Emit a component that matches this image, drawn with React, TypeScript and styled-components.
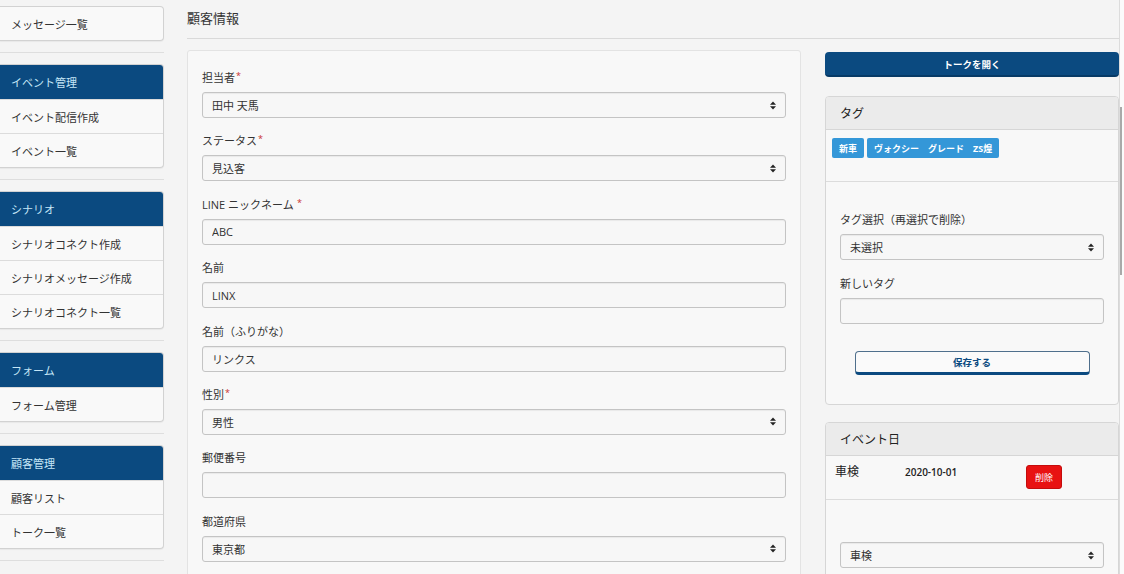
import React from 'react';
import styled, { createGlobalStyle } from 'styled-components';

const GlobalStyle = createGlobalStyle`
  html, body { margin: 0; padding: 0; overflow: hidden; background: #f4f4f4; }
  body { font-family: "Open Sans", "Noto Sans CJK JP", sans-serif; color: #333; }
  * { box-sizing: border-box; }
`;

const Page = styled.div`
  display: flex;
  align-items: flex-start;
  width: 1124px;
  height: 574px;
  overflow: hidden;
  background: #f4f4f4;
`;

/* ---------- Sidebar ---------- */
const Sidebar = styled.nav`
  width: 164px;
  flex: none;
  padding-top: 6px;
  display: flex;
  flex-direction: column;
  & > * { flex: none; }
`;

const NavCard = styled.div`
  background: #f9f9f9;
  border: 1px solid #d2d2d2;
  border-left: none;
  border-radius: 0 4px 4px 0;
  overflow: hidden;
  box-shadow: 0 1px 1px rgba(0, 0, 0, 0.05);
`;

const NavHeader = styled.div`
  height: 34px;
  display: flex;
  align-items: center;
  padding-left: 11px;
  background: #0b4a80;
  color: #c4e6f7;
  font-size: 11px;
`;

const NavItem = styled.div`
  box-sizing: content-box;
  height: 33px;
  display: flex;
  align-items: center;
  padding-left: 11px;
  font-size: 11px;
  color: #333;
  & + &,
  ${NavHeader} + & {
    border-top: 1px solid #dcdcdc;
  }
`;

const NavDivider = styled.div`
  height: 1px;
  background: #dedede;
  margin: 11px 0;
`;

/* ---------- Main ---------- */
const Main = styled.main`
  width: 932px;
  margin-left: 23px;
  flex: none;
  display: flex;
  flex-direction: column;
  & > * { flex: none; }
`;

const TitleBar = styled.div`
  height: 39px;
  padding-bottom: 3px;
  border-bottom: 1px solid #d9d9d9;
  display: flex;
  align-items: center;
  font-size: 13px;
  color: #333;
`;

const Content = styled.div`
  margin-top: 11px;
  display: grid;
  grid-template-columns: 614px 294px;
  gap: 24px;
  align-items: start;
`;

const FormPanel = styled.section`
  border: 1px solid #e3e3e3;
  border-radius: 3px;
  background: #f8f8f8;
  padding: 19px 14px;
`;

const Field = styled.div<{ $gap?: number }>`
  margin-bottom: ${(p) => (p.$gap ?? 15.4)}px;
`;

const Label = styled.label`
  display: block;
  font-size: 11px;
  line-height: 16px;
  margin-bottom: 6px;
  color: #333;
`;

const Req = styled.span`
  color: #c9302c;
  font-size: 9px;
  vertical-align: top;
  line-height: 12px;
  margin-left: 1px;
`;

const TextInput = styled.input`
  display: block;
  width: 100%;
  height: 26px;
  border: 1px solid #c4c4c4;
  border-radius: 3px;
  background: #f7f7f7;
  padding: 0 9px;
  font-family: inherit;
  font-size: 11px;
  color: #333;
  box-shadow: inset 0 1px 1px rgba(0, 0, 0, 0.06);
  outline: none;
`;

const SelectBox = styled.div`
  height: 26px;
  border: 1px solid #c4c4c4;
  border-radius: 3px;
  background: #f7f7f7;
  padding: 0 9px;
  display: flex;
  align-items: center;
  justify-content: space-between;
  font-size: 11px;
  color: #333;
  box-shadow: inset 0 1px 1px rgba(0, 0, 0, 0.06);
`;

const Arrow = () => (
  <svg width="6" height="9" viewBox="0 0 6 9" aria-hidden="true">
    <polygon points="0,3.8 3,0.4 6,3.8" fill="#222" />
    <polygon points="0,5.2 6,5.2 3,8.6" fill="#222" />
  </svg>
);

const Select: React.FC<{ value: string }> = ({ value }) => (
  <SelectBox>
    <span>{value}</span>
    <Arrow />
  </SelectBox>
);

/* ---------- Right column ---------- */
const SideColumn = styled.aside`
  display: flex;
  flex-direction: column;
`;

const PrimaryButton = styled.button`
  margin-top: 2px;
  height: 25px;
  border: none;
  border-bottom: 2px solid #073a66;
  border-radius: 4px;
  background: #0b4a80;
  color: #fff;
  font-family: inherit;
  font-size: 9.5px;
  font-weight: 700;
`;

const Panel = styled.section<{ $mt: number }>`
  margin-top: ${(p) => p.$mt}px;
  border: 1px solid #d6d6d6;
  border-radius: 4px;
  background: #f8f8f8;
  overflow: hidden;
`;

const PanelHeader = styled.div`
  height: 33px;
  background: #ebebeb;
  border-bottom: 1px solid #d6d6d6;
  padding-left: 14px;
  display: flex;
  align-items: center;
  font-size: 12px;
  color: #222;
`;

const TagArea = styled.div`
  height: 52px;
  padding: 8px 6px 0;
  border-bottom: 1px solid #dcdcdc;
  display: flex;
  align-items: flex-start;
  gap: 3px;
`;

const Tag = styled.span`
  height: 20px;
  padding: 0 7px;
  display: inline-flex;
  align-items: center;
  background: #3497d8;
  border-radius: 2px;
  color: #fff;
  font-size: 9px;
  font-weight: 700;
  white-space: pre;
`;

const PanelBody = styled.div<{ $pt: number }>`
  padding: ${(p) => p.$pt}px 14px 29px;
`;

const OutlineButton = styled.button`
  display: block;
  width: 235px;
  height: 24px;
  margin: 27px auto 0;
  border: 1px solid #4f6f8c;
  border-bottom: 3px solid #0b4a80;
  border-radius: 4px;
  background: #fafafa;
  color: #0b4a80;
  font-family: inherit;
  font-size: 9.5px;
  font-weight: 700;
`;

const EventRow = styled.div`
  display: grid;
  grid-template-columns: 70px 121px 36px;
  align-items: start;
  padding: 9px 0 10px 9px;
  border-bottom: 1px solid #dcdcdc;
`;

const EventName = styled.span`
  font-size: 12px;
  line-height: 14px;
  color: #222;
`;

const EventDate = styled.span`
  font-size: 10px;
  line-height: 14px;
  font-weight: 600;
  color: #222;
`;

const DangerButton = styled.button`
  width: 36px;
  height: 24px;
  padding: 0;
  border: 1px solid #c40c0c;
  border-radius: 3px;
  background: #e81212;
  color: #fff;
  font-family: inherit;
  font-size: 9px;
`;

/* ---------- Scrollbar ---------- */
const ScrollTrack = styled.div`
  width: 5px;
  height: 574px;
  flex: none;
  border-left: 1px solid #dcdcdc;
  background: #fbfbfb;
`;

const ScrollThumb = styled.div`
  width: 2px;
  height: 168px;
  margin-top: 107px;
  background: #a9a9a9;
`;

const formFields: { label: string; req?: boolean; space?: boolean; value: string; select?: boolean }[] = [
  { label: '担当者', req: true, value: '田中 天馬', select: true },
  { label: 'ステータス', req: true, value: '見込客', select: true },
  { label: 'LINE ニックネーム', req: true, space: true, value: 'ABC' },
  { label: '名前', value: 'LINX' },
  { label: '名前（ふりがな）', value: 'リンクス' },
  { label: '性別', req: true, value: '男性', select: true },
  { label: '郵便番号', value: '' },
  { label: '都道府県', value: '東京都', select: true },
];

const navGroups: { header?: string; items: string[] }[] = [
  { items: ['メッセージ一覧'] },
  { header: 'イベント管理', items: ['イベント配信作成', 'イベント一覧'] },
  { header: 'シナリオ', items: ['シナリオコネクト作成', 'シナリオメッセージ作成', 'シナリオコネクト一覧'] },
  { header: 'フォーム', items: ['フォーム管理'] },
  { header: '顧客管理', items: ['顧客リスト', 'トーク一覧'] },
];

export default function App() {
  return (
    <>
      <GlobalStyle />
      <Page>
        <Sidebar>
          {navGroups.map((g, i) => (
            <React.Fragment key={i}>
              <NavCard>
                {g.header && <NavHeader>{g.header}</NavHeader>}
                {g.items.map((it) => (
                  <NavItem key={it}>{it}</NavItem>
                ))}
              </NavCard>
              <NavDivider />
            </React.Fragment>
          ))}
        </Sidebar>

        <Main>
          <TitleBar>顧客情報</TitleBar>
          <Content>
            <FormPanel>
              {formFields.map((f) => (
                <Field key={f.label}>
                  <Label>
                    {f.label}
                    {f.req && <Req>{f.space ? ' *' : '*'}</Req>}
                  </Label>
                  {f.select ? <Select value={f.value} /> : <TextInput readOnly defaultValue={f.value} />}
                </Field>
              ))}
            </FormPanel>

            <SideColumn>
              <PrimaryButton>トークを開く</PrimaryButton>

              <Panel $mt={19}>
                <PanelHeader>タグ</PanelHeader>
                <TagArea>
                  <Tag>新車</Tag>
                  <Tag>{'ヴォクシー　グレード　ZS煌'}</Tag>
                </TagArea>
                <PanelBody $pt={30}>
                  <Field $gap={16}>
                    <Label>タグ選択（再選択で削除）</Label>
                    <Select value="未選択" />
                  </Field>
                  <Field $gap={0}>
                    <Label>新しいタグ</Label>
                    <TextInput readOnly defaultValue="" />
                  </Field>
                  <OutlineButton>保存する</OutlineButton>
                </PanelBody>
              </Panel>

              <Panel $mt={17}>
                <PanelHeader>イベント日</PanelHeader>
                <EventRow>
                  <EventName>車検</EventName>
                  <EventDate>2020-10-01</EventDate>
                  <DangerButton>削除</DangerButton>
                </EventRow>
                <PanelBody $pt={42}>
                  <Select value="車検" />
                </PanelBody>
              </Panel>
            </SideColumn>
          </Content>
        </Main>

        <ScrollTrack>
          <ScrollThumb />
        </ScrollTrack>
      </Page>
    </>
  );
}
